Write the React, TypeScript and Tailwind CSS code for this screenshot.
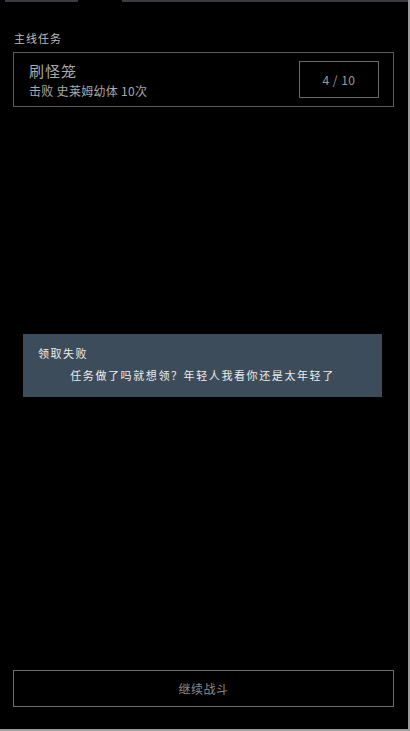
export default function App() {
  return (
    <div
      className="w-[410px] h-[731px] bg-black flex flex-col border-r-2 border-b-2 border-[#9c9c9c] overflow-hidden"
      style={{ fontFamily: '"Noto Sans CJK SC", "Noto Sans", sans-serif' }}
    >
      {/* top strip */}
      <div className="flex h-[2px] shrink-0">
        <div className="w-[5px]" />
        <div className="w-[73px] bg-[#3a3a42]" />
        <div className="w-[44px]" />
        <div className="flex-1 bg-[#3a3a42]" />
      </div>

      <div className="flex-1 flex flex-col pl-[13px] pr-[14px]">
        <div className="mt-[29px] ml-[1px] text-[11px] leading-[14px] tracking-[1px] text-[#bdbdbd]">
          主线任务
        </div>

        <div className="mt-[7px] h-[55px] border border-[#5c5c5c] flex items-center justify-between pl-[15px] pr-[14px]">
          <div className="flex flex-col">
            <div className="text-[15px] leading-[20px] tracking-[1px] text-[#a9a9a9]">刷怪笼</div>
            <div className="mt-[2px] text-[12px] leading-[16px] tracking-[0.3px] text-[#a9a9a9]">
              击败&nbsp;史莱姆幼体 10次
            </div>
          </div>
          <div className="w-[80px] h-[37px] border border-[#6a6a6a] flex items-center justify-center text-[12px] tracking-[0.5px] text-[#9a9a9a]">
            4&nbsp;/&nbsp;10
          </div>
        </div>

        <div className="mt-[227px] ml-[10px] w-[359px] h-[63px] bg-[#3c4c5a] flex flex-col">
          <div className="mt-[12px] pl-[15px] text-[11px] leading-[14px] tracking-[1.5px] text-[#ececec]">
            领取失败
          </div>
          <div className="mt-[8px] text-center text-[11px] leading-[14px] tracking-[1.6px] text-[#ececec]">
            任务做了吗就想领？年轻人我看你还是太年轻了
          </div>
        </div>

        <button className="mt-auto mb-[22px] h-[37px] border border-[#6e6e6e] flex items-center justify-center text-[12px] tracking-[0.5px] text-[#8a8a8a]">
          继续战斗
        </button>
      </div>
    </div>
  );
}
